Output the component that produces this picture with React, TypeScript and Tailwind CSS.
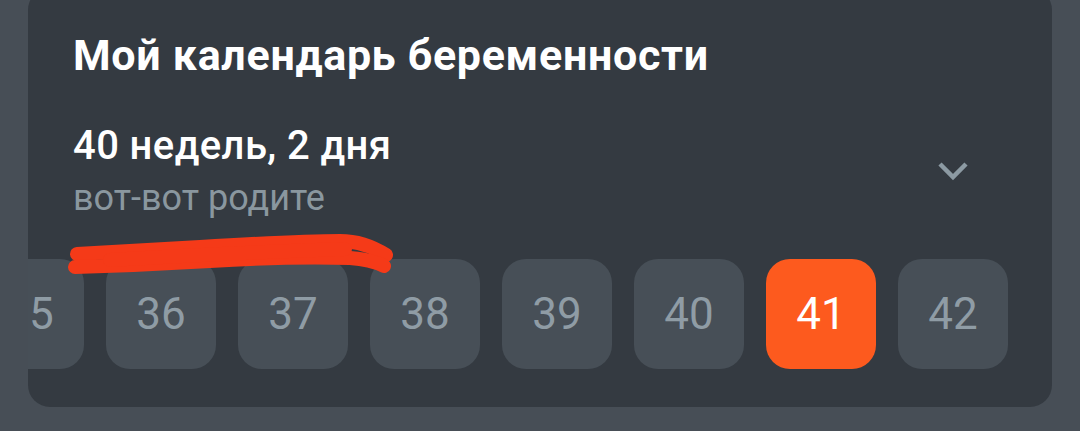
const weeks = [35, 36, 37, 38, 39, 40, 41, 42];
const current = 41;

const WeekPill = ({ week }: { week: number }) => {
  const active = week === current;
  return (
    <div
      className={`flex h-[110px] w-[110px] shrink-0 items-center justify-center rounded-[24px] text-[44px] leading-none ${
        active ? 'bg-[#fd5a1e] text-white' : 'bg-[#474f57] text-[#8f9ca5]'
      }`}
    >
      {week}
    </div>
  );
};

// freehand marker stroke drawn over the screenshot
const Scribble = () => (
  <svg
    className="pointer-events-none absolute left-0 top-0"
    width="1080"
    height="431"
    viewBox="0 0 1080 431"
    fill="none"
  >
    <g stroke="#f53a18" strokeWidth="14" strokeLinecap="round" strokeLinejoin="round">
      <path d="M77 254 C 110 252, 150 250, 200 247 S 300 241, 340 241 C 360 241, 375 248, 386 255" />
      <path d="M75 267 C 110 266, 160 264, 210 261 S 320 257, 350 258 C 365 259, 376 262, 384 266" />
      <path d="M110 260 C 180 256, 250 252, 345 249" />
    </g>
  </svg>
);

export default function App() {
  return (
    <div className="relative h-[431px] w-[1080px] overflow-hidden bg-[#474e56] font-['Roboto',sans-serif]">
      <div className="ml-[28px] mt-[-12px] h-[419px] w-[1024px] overflow-hidden rounded-[22px] bg-[#343a41] pt-[41px]">
        <div className="pl-[45px]">
          <h1 className="text-[43px] font-bold leading-[52px] tracking-[0.7px] text-white">
            Мой календарь беременности
          </h1>
          <div className="mt-[41px] flex items-center justify-between pr-[83px]">
            <div>
              <div className="text-[40px] font-medium leading-[48px] tracking-[0.4px] text-white">
                40 недель, 2 дня
              </div>
              <div className="mt-[7px] text-[36px] leading-[42px] text-[#8a979f]">вот-вот родите</div>
            </div>
            <svg width="32" height="20" viewBox="0 0 32 20" fill="none">
              <polyline points="3,3 16,16 29,3" stroke="#8c9aa3" strokeWidth="4.5" />
            </svg>
          </div>
        </div>
        <div className="ml-[-54px] mt-[40px] flex gap-[22px]">
          {weeks.map((w) => (
            <WeekPill key={w} week={w} />
          ))}
        </div>
      </div>
      <Scribble />
    </div>
  );
}
